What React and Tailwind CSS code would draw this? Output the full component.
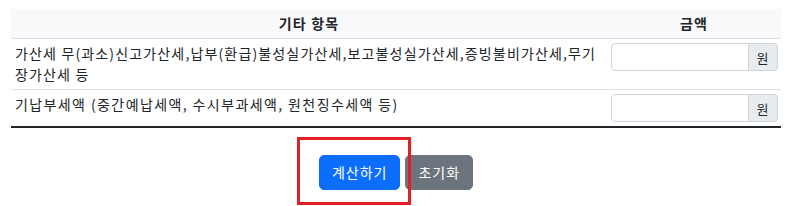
import React from "react";

function MoneyInput() {
  return (
    <div className="flex h-[28px] w-[167px]">
      <input
        type="text"
        className="h-full min-w-0 flex-1 rounded-l-[4px] border border-[#ced4da] bg-white px-2 text-[14px] outline-none"
      />
      <span className="-ml-px flex h-full w-[30px] items-center justify-center rounded-r-[4px] border border-[#ced4da] bg-[#e9ecef] text-[13px] text-[#212529]">
        원
      </span>
    </div>
  );
}

export default function App() {
  return (
    <div
      className="relative h-[206px] w-[805px] bg-white text-[14px] leading-[21px] tracking-[1.15px] text-[#212529]"
      style={{ fontFamily: '"Noto Sans CJK KR", "Noto Sans", sans-serif' }}
    >
      <div className="pl-[11px] pt-[9px]">
        <table className="w-[770px] table-fixed border-collapse">
          <colgroup>
            <col className="w-[596px]" />
            <col className="w-[174px]" />
          </colgroup>
          <thead>
            <tr className="border-b border-[#dee2e6] bg-[#f8f9fa]">
              <th className="px-1 py-1 text-center font-bold">기타 항목</th>
              <th className="px-1 py-1 text-center font-bold">금액</th>
            </tr>
          </thead>
          <tbody>
            <tr className="border-b border-[#dee2e6]">
              <td className="px-1 py-1 align-top">
                <span className="whitespace-nowrap">
                  가산세 무(과소)신고가산세,납부(환급)불성실가산세,보고불성실가산세,증빙불비가산세,무기
                </span>
                <br />
                장가산세 등
              </td>
              <td className="py-1 pl-[4px] pr-1 align-top">
                <MoneyInput />
              </td>
            </tr>
            <tr className="border-b-2 border-[#212529]">
              <td className="px-1 py-1 align-top tracking-[1.4px]">
                기납부세액 (중간예납세액, 수시부과세액, 원천징수세액 등)
              </td>
              <td className="py-1 pl-[4px] pr-1 align-top">
                <MoneyInput />
              </td>
            </tr>
          </tbody>
        </table>
      </div>
      <div className="mt-[27px] flex w-[792px] justify-center gap-[5px]">
        <button className="h-[35px] rounded-[5px] border border-[#0d6efd] bg-[#0d6efd] px-3 text-[14px] tracking-[1px] text-white">
          계산하기
        </button>
        <button className="h-[35px] rounded-[5px] border border-[#6c757d] bg-[#6c757d] px-3 text-[14px] tracking-[1px] text-white">
          초기화
        </button>
      </div>
      <div className="pointer-events-none absolute left-[297px] top-[137px] h-[68px] w-[114px] border-[3px] border-[#e31e24]" />
    </div>
  );
}
